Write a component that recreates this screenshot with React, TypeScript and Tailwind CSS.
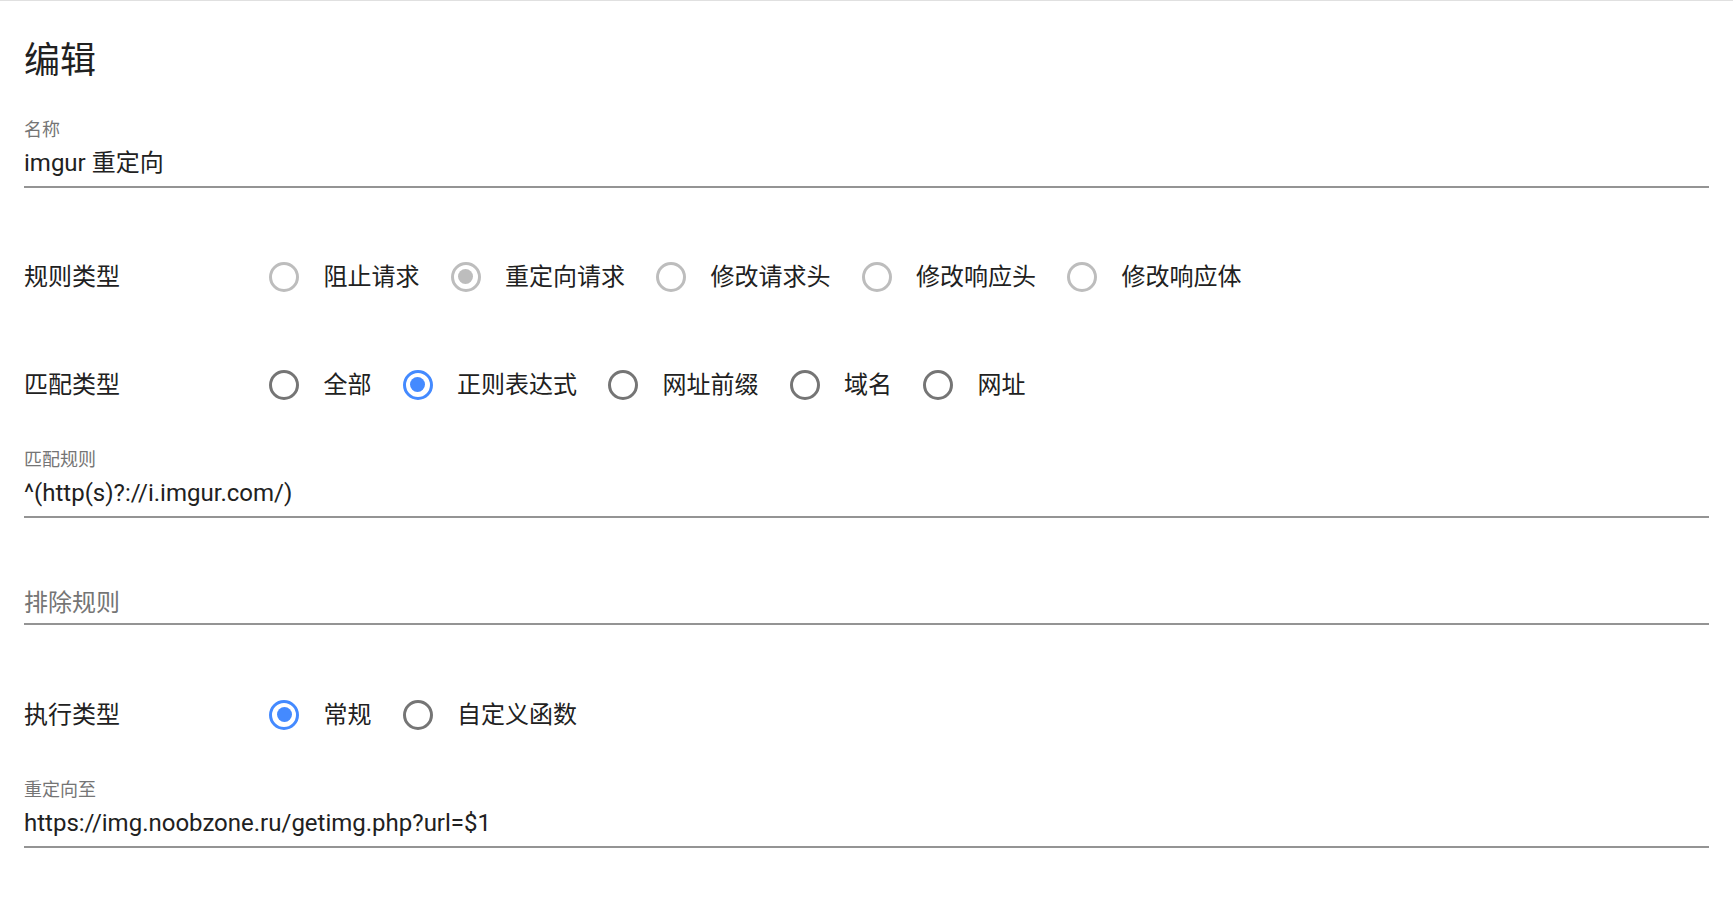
import React from 'react';

interface FieldProps {
  label?: string;
  value?: string;
  placeholder?: string;
  className?: string;
}

interface Option {
  text: string;
  checked?: boolean;
}

interface RadioRowProps {
  title: string;
  options: Option[];
  disabled?: boolean;
  className?: string;
}

function Field({ label, value, placeholder, className = '' }: FieldProps) {
  return (
    <div className={`border-b-2 border-[#949494] pb-[5px] ${className}`}>
      <div className="h-[27px] text-[18px] leading-[27px] text-[#757575]">{label}</div>
      {value ? (
        <div className="mt-[2px] h-[36px] text-[24px] leading-[36px] text-[#212121]">{value}</div>
      ) : (
        <div className="mt-[2px] flex h-[36px] items-center pt-[5px] text-[24px] leading-[36px] text-[#757575]">
          {placeholder}
        </div>
      )}
    </div>
  );
}

function RadioDot({ checked, disabled }: { checked?: boolean; disabled?: boolean }) {
  // 禁用态用浅灰，启用态选中用蓝色
  let ring = 'border-[#757575]';
  let dot = 'bg-[#448aff]';
  if (disabled) {
    ring = 'border-[#bdbdbd]';
    dot = 'bg-[#bdbdbd]';
  } else if (checked) {
    ring = 'border-[#448aff]';
  }
  return (
    <div className={`flex h-[30px] w-[30px] shrink-0 items-center justify-center rounded-full border-[3px] ${ring}`}>
      {checked && <div className={`h-[15px] w-[15px] rounded-full ${dot}`} />}
    </div>
  );
}

function RadioRow({ title, options, disabled, className = '' }: RadioRowProps) {
  return (
    <div className={`flex h-[63px] items-center ${className}`}>
      <div className="w-[245px] shrink-0 text-[24px] leading-[36px] text-[#212121]">{title}</div>
      <div className="flex items-center gap-[31px]">
        {options.map((opt) => (
          <div key={opt.text} className="flex items-center gap-[24.5px]">
            <RadioDot checked={opt.checked} disabled={disabled} />
            <span className="text-[24px] leading-[36px] text-[#212121]">{opt.text}</span>
          </div>
        ))}
      </div>
    </div>
  );
}

export default function App() {
  return (
    <div
      className="min-h-screen border-t border-[#e0e0e0] bg-white px-[24px] pt-[36px]"
      style={{ fontFamily: 'Roboto, "Noto Sans CJK SC", sans-serif' }}
    >
      <h1 className="text-[36px] font-normal leading-[48px] text-[#212121]">编辑</h1>

      <Field className="mt-[31px]" label="名称" value="imgur 重定向" />

      <RadioRow
        className="mt-[57px]"
        title="规则类型"
        disabled
        options={[
          { text: '阻止请求' },
          { text: '重定向请求', checked: true },
          { text: '修改请求头' },
          { text: '修改响应头' },
          { text: '修改响应体' },
        ]}
      />

      <RadioRow
        className="mt-[45px]"
        title="匹配类型"
        options={[
          { text: '全部' },
          { text: '正则表达式', checked: true },
          { text: '网址前缀' },
          { text: '域名' },
          { text: '网址' },
        ]}
      />

      <Field className="mt-[30px]" label="匹配规则" value="^(http(s)?://i.imgur.com/)" />

      <Field className="mt-[35px]" placeholder="排除规则" />

      <RadioRow
        className="mt-[58px]"
        title="执行类型"
        options={[
          { text: '常规', checked: true },
          { text: '自定义函数' },
        ]}
      />

      <Field className="mt-[30px]" label="重定向至" value="https://img.noobzone.ru/getimg.php?url=$1" />
    </div>
  );
}
